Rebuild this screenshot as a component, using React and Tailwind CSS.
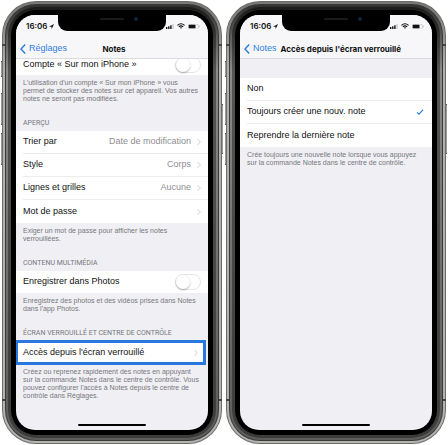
import React from 'react';

// Small outline chevron used by the rows
function Chevron({ color = '#c7c7cc' }) {
  return (
    <svg viewBox="0 0 4 8" className="h-2 w-1 shrink-0" fill="none" stroke={color} strokeWidth="0.8">
      <path d="M0.5 1 L3.4 4 L0.5 7" />
    </svg>
  );
}

function StatusBar() {
  return (
    <div className="flex h-6 items-center justify-between pr-2 pb-[2px] pl-[10px]">
      <div className="flex items-center gap-[2px]">
        <span className="text-[8px] font-semibold">16:06</span>
        <svg viewBox="0 0 10 10" className="h-[5px] w-[5px]">
          <path d="M0 5.4 L10 0 L5.4 10 L4.8 5.4 Z" fill="#111" />
        </svg>
      </div>
      <div className="flex items-center gap-[3px]">
        <svg viewBox="0 0 8 5" className="h-[5px] w-2">
          <rect x="0" y="3" width="1.4" height="2" rx="0.3" fill="#111" />
          <rect x="2.1" y="2.2" width="1.4" height="2.8" rx="0.3" fill="#111" />
          <rect x="4.2" y="1.2" width="1.4" height="3.8" rx="0.3" fill="#111" />
          <rect x="6.3" y="0" width="1.4" height="5" rx="0.3" fill="#c9c9cc" />
        </svg>
        <svg viewBox="0 0 14 10" className="h-[6px] w-2" fill="none" stroke="#111" strokeWidth="1.9">
          <path d="M0.8 3.8 Q7 -1.8 13.2 3.8" />
          <path d="M3.2 6.4 Q7 3 10.8 6.4" />
          <path d="M5 8 Q7 6.4 9 8 L7 10 Z" fill="#111" stroke="none" />
        </svg>
        <svg viewBox="0 0 12 5" className="h-[5px] w-3">
          <rect x="0.3" y="0.3" width="10.2" height="4.4" rx="1.3" fill="none" stroke="#aaa" strokeWidth="0.5" />
          <rect x="0.7" y="0.7" width="6.8" height="3.6" rx="0.7" fill="#111" />
          <rect x="11" y="1.7" width="0.6" height="1.6" fill="#aaa" />
        </svg>
      </div>
    </div>
  );
}

function NavBar({ back, title, centered }) {
  return (
    <div
      className={
        centered
          ? 'grid h-5 grid-cols-[1fr_auto_1fr] items-center border-b border-[#dcdce0] pl-1'
          : 'flex h-5 items-center gap-1 border-b border-[#dcdce0] pl-1'
      }
    >
      <a
        href="#"
        className="flex items-center gap-[3px] font-['Liberation_Sans',sans-serif] text-[9px] text-[#2f7fe0]"
      >
        <svg viewBox="0 0 6 10" className="h-[10px] w-[6px]" fill="none" stroke="#2f7fe0" strokeWidth="1.5">
          <path d="M5.2 0.6 L1 5 L5.2 9.4" />
        </svg>
        {back}
      </a>
      <h1 className="text-[8px] font-bold whitespace-nowrap">{title}</h1>
    </div>
  );
}

// Phone body: metal edge, black bezel, notch and screen
function Phone({ back, title, centered, children }) {
  return (
    <div className="relative min-w-0 flex-1">
      {/* Side buttons */}
      <div className="absolute top-[60px] -left-[1px] h-4 w-[2px] border-y border-[#555] bg-[#9b9c9a]" />
      <div className="absolute top-[92px] -left-[1px] h-8 w-[2px] border-y border-[#555] bg-[#9b9c9a]" />
      <div className="absolute top-[132px] -left-[1px] h-8 w-[2px] border-y border-[#555] bg-[#9b9c9a]" />
      <div className="absolute top-[103px] -right-[1px] h-[50px] w-[2px] border-y border-[#555] bg-[#9b9c9a]" />

      <div className="relative rounded-[34px] bg-[#6c6d6b] p-[1px]">
        <div className="rounded-[33px] bg-linear-to-b from-[#777875] via-[#b0b1af] via-15% to-[#b4b5b3] p-[2px]">
          <div className="rounded-[31px] bg-[#3a3b39] p-[1px]">
            <div className="rounded-[30px] bg-linear-to-b from-[#333432] via-[#8b8c8a] via-15% to-[#5c5d5b] p-[2px]">
              <div className="rounded-[28px] bg-linear-to-b from-[#1c1d1b] via-[#555654] via-15% to-[#3c3d3b] p-[3px]">
                <div className="relative rounded-[25px] bg-black p-[5px]">
                  <div className="flex h-[415px] flex-col overflow-hidden rounded-[19px] bg-[#efeff4]">
                    <header className="bg-[#f7f7f9]">
                      <StatusBar />
                      <NavBar back={back} title={title} centered={centered} />
                    </header>
                    <main className="flex-1">{children}</main>
                    <div className="mx-auto mb-1 h-[2px] w-[68px] rounded-full bg-black" />
                  </div>
                  {/* Notch with speaker and camera */}
                  <div className="absolute top-0 left-1/2 flex h-[21px] w-[108px] -translate-x-1/2 justify-center rounded-b-[9px] bg-black">
                    <span className="mt-2 h-[2px] w-6 rounded-full bg-[#1b1b1d]" />
                    <span className="absolute top-[7px] right-7 h-1 w-1 rounded-full bg-[#12243d]" />
                  </div>
                </div>
              </div>
            </div>
          </div>
        </div>
        {/* Antenna bands */}
        <span className="absolute top-[43px] left-0 h-[2px] w-[3px] bg-[#444]" />
        <span className="absolute top-[43px] right-0 h-[2px] w-[3px] bg-[#444]" />
        <span className="absolute bottom-[43px] left-0 h-[2px] w-[3px] bg-[#444]" />
        <span className="absolute right-0 bottom-[43px] h-[2px] w-[3px] bg-[#444]" />
      </div>
    </div>
  );
}

function List({ children }) {
  return <div className="bg-white pl-[7px]">{children}</div>;
}

function Row({ label, value, last, chevronColor }) {
  return (
    <button
      type="button"
      className={`flex h-[23px] w-full items-center justify-between pr-[7px] text-left text-[9px] ${
        last ? '' : 'border-b border-[#ececef]'
      }`}
    >
      <span>{label}</span>
      <span className="flex items-center gap-[6px] text-[#8e8e93]">
        {value}
        <Chevron color={chevronColor} />
      </span>
    </button>
  );
}

function SwitchRow({ label, className }) {
  return (
    <label className={`flex items-center justify-between pr-[7px] text-[9px] ${className}`}>
      {label}
      <span className="relative flex">
        <input
          type="checkbox"
          role="switch"
          className="peer h-4 w-[26px] appearance-none rounded-full border border-[#e5e5e8] bg-white checked:bg-green-500"
        />
        <span className="pointer-events-none absolute top-[1px] left-[1px] h-[14px] w-[14px] rounded-full bg-white shadow-[0_1px_2px_rgba(0,0,0,0.3)] peer-checked:left-3" />
      </span>
    </label>
  );
}

function Footnote({ children }) {
  return <p className="pt-1 pl-[7px] text-[7px] leading-[8px] whitespace-nowrap text-[#77777c]">{children}</p>;
}

function Heading({ children }) {
  return (
    <h2 className="pb-1 pl-[7px] font-['Roboto',sans-serif] text-[7px] leading-[8px] whitespace-nowrap text-[#77777c] uppercase">
      {children}
    </h2>
  );
}

function Option({ label, checked, last }) {
  return (
    <label
      className={`flex h-[23px] items-center justify-between pr-2 text-[9px] ${
        last ? '' : 'border-b border-[#ececef]'
      }`}
    >
      {label}
      <input type="radio" name="access" defaultChecked={checked} className="peer sr-only" />
      <svg
        viewBox="0 0 8 8"
        className="invisible h-2 w-2 peer-checked:visible"
        fill="none"
        stroke="#2f7fe0"
        strokeWidth="1.2"
      >
        <path d="M1 4.4 L2.9 6.2 L7 1.8" />
      </svg>
    </label>
  );
}

function NotesSettings() {
  return (
    <div className="font-['Liberation_Sans',sans-serif]">
      <div className="overflow-hidden bg-white pl-[7px]">
        <SwitchRow label="Compte « Sur mon iPhone »" className="-mt-1 h-5" />
      </div>
      <Footnote>
        L'utilisation d'un compte « Sur mon iPhone » vous
        <br />
        permet de stocker des notes sur cet appareil. Vos autres
        <br />
        notes ne seront pas modifiées.
      </Footnote>

      <div className="pt-4">
        <Heading>Aperçu</Heading>
        <List>
          <Row label="Trier par" value="Date de modification" />
          <Row label="Style" value="Corps" />
          <Row label="Lignes et grilles" value="Aucune" />
          <Row label="Mot de passe" last />
        </List>
        <Footnote>
          Exiger un mot de passe pour afficher les notes
          <br />
          verrouillées.
        </Footnote>
      </div>

      <div className="pt-4">
        <Heading>Contenu multimédia</Heading>
        <List>
          <SwitchRow label="Enregistrer dans Photos" className="h-[22px]" />
        </List>
        <Footnote>
          Enregistrez des photos et des vidéos prises dans Notes
          <br />
          dans l'app Photos.
        </Footnote>
      </div>

      <div className="pt-4">
        <Heading>Écran verrouillé et centre de contrôle</Heading>
        <div className="mr-[3px] bg-white pl-[7px] outline-3 -outline-offset-2 outline-[#2878e0]">
          <Row label="Accès depuis l'écran verrouillé" chevronColor="#e3b5cf" last />
        </div>
        <Footnote>
          Créez ou reprenez rapidement des notes en appuyant
          <br />
          sur la commande Notes dans le centre de contrôle. Vous
          <br />
          pouvez configurer l'accès à Notes depuis le centre de
          <br />
          contrôle dans Réglages.
        </Footnote>
      </div>
    </div>
  );
}

function LockScreenAccess() {
  return (
    <div className="pt-[19px] font-['Liberation_Sans',sans-serif]">
      <List>
        <Option label="Non" />
        <Option label="Toujours créer une nouv. note" checked />
        <Option label="Reprendre la dernière note" last />
      </List>
      <Footnote>
        Crée toujours une nouvelle note lorsque vous appuyez
        <br />
        sur la commande Notes dans le centre de contrôle.
      </Footnote>
    </div>
  );
}

export default function App() {
  return (
    <div className="flex gap-1 bg-white px-[2px] pt-[1px] font-['Inter',sans-serif] text-[#111]">
      <Phone back="Réglages" title="Notes" centered>
        <NotesSettings />
      </Phone>
      <Phone back="Notes" title="Accès depuis l'écran verrouillé">
        <LockScreenAccess />
      </Phone>
    </div>
  );
}
